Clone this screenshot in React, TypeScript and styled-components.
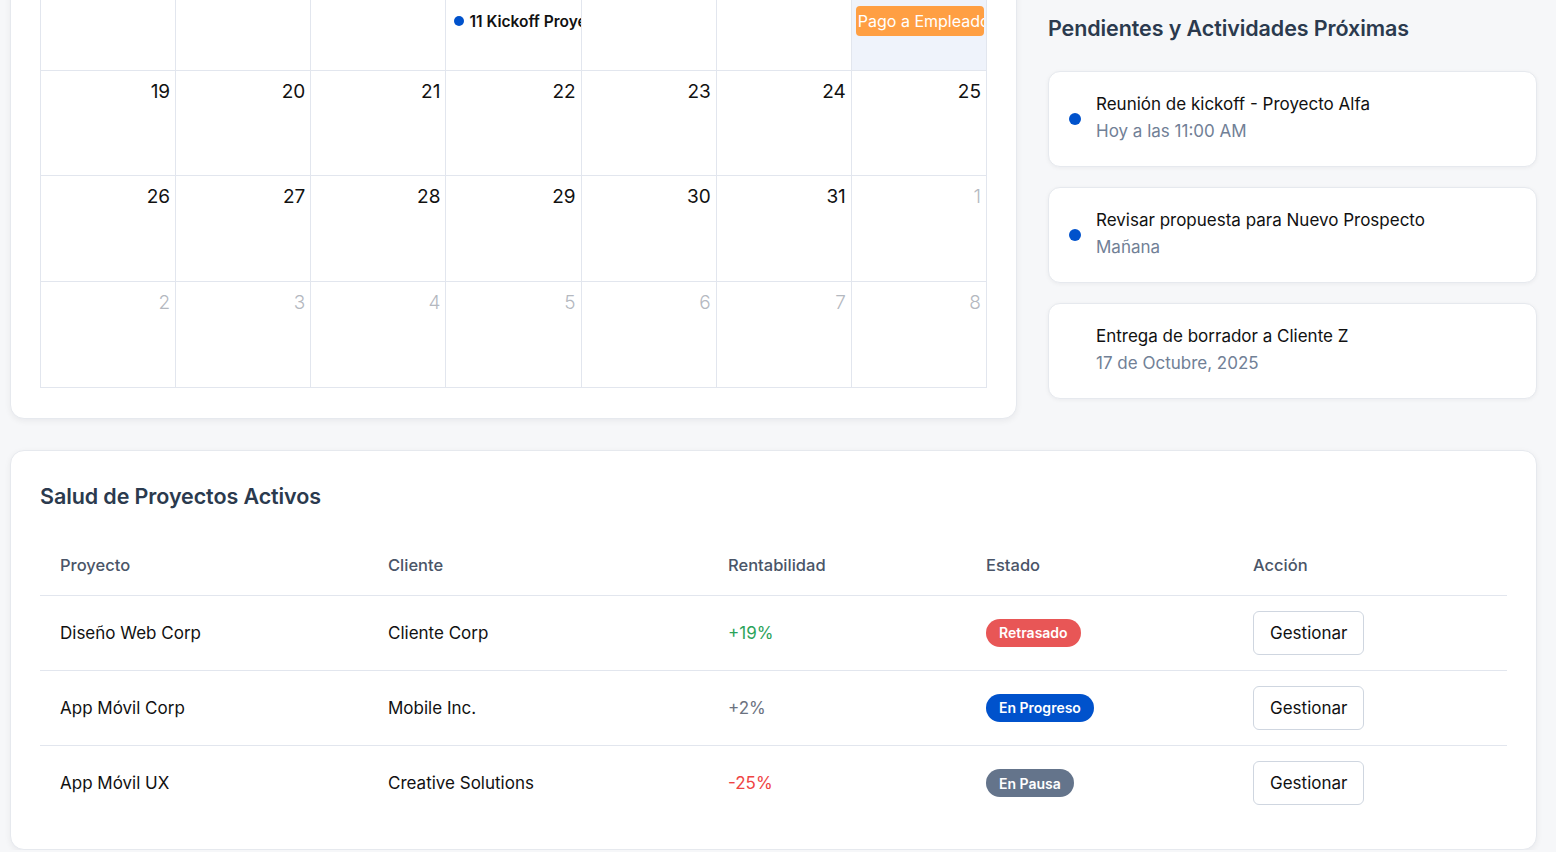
import React from "react";
import styled, { createGlobalStyle } from "styled-components";

const Global = createGlobalStyle`
  html, body { margin: 0; padding: 0; background: #f6f7f9; overflow: hidden; }
  body { font-family: Inter, "Noto Sans", sans-serif; color: #111; }
  * { box-sizing: border-box; }
`;

const Page = styled.div`
  display: flex;
  flex-direction: column;
  gap: 31px;
  padding: 0 19px 0 10px;
`;

const TopRow = styled.div`
  display: grid;
  grid-template-columns: 1007px 1fr;
  column-gap: 31px;
  align-items: start;
`;

const Card = styled.section`
  background: #fff;
  border: 1px solid #e6e9ee;
  border-radius: 14px;
  box-shadow: 0 2px 6px rgba(15, 23, 42, 0.06);
`;

const CalendarCard = styled(Card)`
  margin-top: -67px;
  padding: 30px 29px 30px;
`;

const Grid = styled.div`
  display: grid;
  grid-template-columns: repeat(7, 1fr);
  border-top: 1px solid #e2e6ee;
  border-left: 1px solid #e2e6ee;
`;

const Cell = styled.div<{ $today?: boolean }>`
  height: 105.67px;
  border-right: 1px solid #e2e6ee;
  border-bottom: 1px solid #e2e6ee;
  background: ${(p) => (p.$today ? "#eff3fb" : "#fff")};
  padding: 6px 5px 0 8px;
  display: flex;
  flex-direction: column;
  overflow: hidden;
`;

const DayNum = styled.div<{ $muted?: boolean }>`
  text-align: right;
  font-size: 19px;
  line-height: 30px;
  color: ${(p) => (p.$muted ? "#b4b8bf" : "#111")};
  font-weight: ${(p) => (p.$muted ? 300 : 400)};
`;

const EventDot = styled.div`
  display: flex;
  align-items: center;
  gap: 5px;
  margin-top: 5px;
  height: 30px;
  white-space: nowrap;
  font-size: 15.5px;
  font-weight: 600;
  color: #111;
`;

const Dot = styled.span<{ $size?: number; $hidden?: boolean }>`
  display: inline-block;
  flex: none;
  width: ${(p) => p.$size ?? 10}px;
  height: ${(p) => p.$size ?? 10}px;
  border-radius: 50%;
  background: ${(p) => (p.$hidden ? "transparent" : "#0052cc")};
`;

const EventBlock = styled.div`
  margin: 5px -3px 0 -4px;
  height: 30px;
  border-radius: 4px;
  background: #ff9f43;
  color: #fff;
  font-size: 16px;
  line-height: 30px;
  padding: 0 2px;
  white-space: nowrap;
  overflow: hidden;
`;

const Side = styled.aside`
  display: flex;
  flex-direction: column;
  gap: 20px;
  padding-top: 13px;
`;

const Title = styled.h2`
  margin: 0;
  font-size: 21.5px;
  line-height: 30px;
  font-weight: 600;
  color: #2b3a4e;
  letter-spacing: -0.1px;
`;

const SideTitle = styled(Title)`
  margin-bottom: 8px;
`;

const TaskCard = styled(Card)`
  height: 96px;
  display: flex;
  align-items: center;
  gap: 15px;
  padding: 0 20px;
  border-radius: 12px;
  box-shadow: 0 1px 4px rgba(15, 23, 42, 0.05);
`;

const TaskText = styled.div`
  display: flex;
  flex-direction: column;
  gap: 6px;
  margin-top: -2px;
`;

const TaskTitle = styled.div`
  font-size: 17px;
  line-height: 21px;
  color: #111;
`;

const TaskSub = styled.div`
  font-size: 17px;
  line-height: 21px;
  color: #718096;
`;

const HealthCard = styled(Card)`
  padding: 30px 29px 28px;
`;

const Table = styled.div`
  margin-top: 24px;
  display: grid;
  grid-template-columns: 328px 340px 258px 267px 1fr;
`;

const HeadCell = styled.div`
  padding: 0 20px;
  height: 61px;
  display: flex;
  align-items: center;
  font-size: 16.5px;
  font-weight: 500;
  color: #4a5568;
  border-bottom: 1px solid #e2e6ee;
`;

const BodyCell = styled.div<{ $last?: boolean; $tone?: string }>`
  padding: 0 20px;
  height: 75px;
  display: flex;
  align-items: center;
  font-size: 17px;
  color: ${(p) => p.$tone ?? "#111"};
  border-bottom: ${(p) => (p.$last ? "none" : "1px solid #e2e6ee")};
`;

const Badge = styled.span<{ $bg: string }>`
  display: inline-flex;
  align-items: center;
  height: 28px;
  padding: 0 13px;
  border-radius: 14px;
  background: ${(p) => p.$bg};
  color: #fff;
  font-size: 14px;
  font-weight: 600;
`;

const Button = styled.button`
  height: 44px;
  padding: 0 16px;
  border: 1px solid #cfd6e0;
  border-radius: 6px;
  background: #fff;
  font-family: inherit;
  font-size: 17px;
  color: #111;
`;

type Day = { n: number; muted?: boolean; today?: boolean; event?: "kickoff" | "pago" };

const weeks: Day[][] = [
  [{ n: 12 }, { n: 13 }, { n: 14 }, { n: 15, event: "kickoff" }, { n: 16 }, { n: 17 }, { n: 18, today: true, event: "pago" }],
  [19, 20, 21, 22, 23, 24, 25].map((n) => ({ n })),
  [26, 27, 28, 29, 30, 31].map((n) => ({ n } as Day)).concat([{ n: 1, muted: true }]),
  [2, 3, 4, 5, 6, 7, 8].map((n) => ({ n, muted: true })),
];

const tasks = [
  { title: "Reunión de kickoff - Proyecto Alfa", sub: "Hoy a las 11:00 AM", dot: true },
  { title: "Revisar propuesta para Nuevo Prospecto", sub: "Mañana", dot: true },
  { title: "Entrega de borrador a Cliente Z", sub: "17 de Octubre, 2025", dot: false },
];

const projects = [
  { name: "Diseño Web Corp", client: "Cliente Corp", rent: "+19%", tone: "#2ba35a", status: "Retrasado", bg: "#e85656" },
  { name: "App Móvil Corp", client: "Mobile Inc.", rent: "+2%", tone: "#6b7280", status: "En Progreso", bg: "#0052cc" },
  { name: "App Móvil UX", client: "Creative Solutions", rent: "-25%", tone: "#ef4444", status: "En Pausa", bg: "#64748b" },
];

export default function App() {
  return (
    <>
      <Global />
      <Page>
        <TopRow>
          <CalendarCard>
            <Grid>
              {weeks.flat().map((d, i) => (
                <Cell key={i} $today={d.today}>
                  <DayNum $muted={d.muted}>{d.n}</DayNum>
                  {d.event === "kickoff" && (
                    <EventDot>
                      <Dot $size={10} />
                      11 Kickoff Proyecto Alfa
                    </EventDot>
                  )}
                  {d.event === "pago" && <EventBlock>Pago a Empleados</EventBlock>}
                </Cell>
              ))}
            </Grid>
          </CalendarCard>
          <Side>
            <SideTitle>Pendientes y Actividades Próximas</SideTitle>
            {tasks.map((t) => (
              <TaskCard key={t.title}>
                <Dot $size={12} $hidden={!t.dot} />
                <TaskText>
                  <TaskTitle>{t.title}</TaskTitle>
                  <TaskSub>{t.sub}</TaskSub>
                </TaskText>
              </TaskCard>
            ))}
          </Side>
        </TopRow>
        <HealthCard>
          <Title>Salud de Proyectos Activos</Title>
          <Table>
            {["Proyecto", "Cliente", "Rentabilidad", "Estado", "Acción"].map((h) => (
              <HeadCell key={h}>{h}</HeadCell>
            ))}
            {projects.map((p, i) => {
              const last = i === projects.length - 1;
              return (
                <React.Fragment key={p.name}>
                  <BodyCell $last={last}>{p.name}</BodyCell>
                  <BodyCell $last={last}>{p.client}</BodyCell>
                  <BodyCell $last={last} $tone={p.tone}>{p.rent}</BodyCell>
                  <BodyCell $last={last}>
                    <Badge $bg={p.bg}>{p.status}</Badge>
                  </BodyCell>
                  <BodyCell $last={last}>
                    <Button>Gestionar</Button>
                  </BodyCell>
                </React.Fragment>
              );
            })}
          </Table>
        </HealthCard>
      </Page>
    </>
  );
}
